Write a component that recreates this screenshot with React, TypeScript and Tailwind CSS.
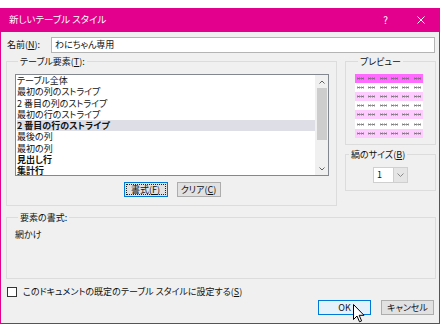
import React from 'react';

const items = [
  { label: 'テーブル全体', bold: false },
  { label: '最初の列のストライプ', bold: false },
  { label: '2 番目の列のストライプ', bold: false },
  { label: '最初の行のストライプ', bold: false },
  { label: '2 番目の行のストライプ', bold: true, selected: true },
  { label: '最後の列', bold: false },
  { label: '最初の列', bold: false },
  { label: '見出し行', bold: true },
  { label: '集計行', bold: true },
];

const previewRows = ['bg-[#ff6bff]', 'bg-white', 'bg-[#ffccff]', 'bg-white', 'bg-[#ffccff]', 'bg-white', 'bg-[#ffccff]'];

function Mark() {
  return (
    <svg width="7" height="3" viewBox="0 0 7 3">
      <path d="M0 0.5L3 2.5M0 2.5L3 0.5M4 0.5L7 2.5M4 2.5L7 0.5M0 1.5H7" stroke="#6b6b6b" strokeWidth="0.6" fill="none" />
    </svg>
  );
}

function Legend({ children }: { children: React.ReactNode }) {
  return <legend className="ml-[3px] px-[2px] leading-[11px]">{children}</legend>;
}

export default function App() {
  return (
    <div className="relative w-[442px] h-[325px] bg-white pt-[8px] font-['Noto_Sans_CJK_JP',sans-serif] [font-feature-settings:'palt'] text-[9px] text-[#111]">
      <div className="w-[440px] h-[316px] bg-[#f0f0f0] border border-t-0 border-[#e3008c] flex flex-col">
        {/* title bar */}
        <div className="h-[24px] shrink-0 bg-[#e3008c] flex items-center pl-[8px] text-white">
          <span className="text-[9.5px] leading-none">新しいテーブル スタイル</span>
          <span className="ml-auto text-[10px] leading-none">?</span>
          <svg className="ml-[29px] mr-[14px]" width="8" height="8" viewBox="0 0 8 8">
            <path d="M0.5 0.5L7.5 7.5M7.5 0.5L0.5 7.5" stroke="#fff" strokeWidth="1" />
          </svg>
        </div>

        <div className="pl-[5px] pr-[3px] flex flex-col">
          {/* name */}
          <div className="mt-[5px] h-[16px] flex items-center">
            <span className="w-[45px] pl-[1px]">名前(<u>N</u>):</span>
            <div className="flex-1 mr-[1px] h-[16px] bg-white border border-[#b4b4b4] flex items-center pl-[3px]">わにちゃん専用</div>
          </div>

          {/* middle */}
          <div className="mt-[3px] flex">
            <fieldset className="w-[331px] h-[150px] border border-[#dcdcdc] pl-[8px] pr-[7px]">
              <Legend>テーブル要素(<u>T</u>):</Legend>
              <div className="mt-[7px] h-[102px] bg-white border border-[#828790] flex overflow-hidden">
                <div className="flex-1 pl-[1px]">
                  {items.map((it) => (
                    <div
                      key={it.label}
                      className={
                        'h-[11.3px] leading-[11.3px] whitespace-nowrap ' +
                        (it.bold ? 'font-bold ' : '') +
                        (it.selected ? 'bg-[#dedee6]' : '')
                      }
                    >
                      {it.label}
                    </div>
                  ))}
                </div>
                <div className="w-[13px] bg-[#f0f0f0] flex flex-col items-center">
                  <svg className="mt-[5px]" width="6" height="4" viewBox="0 0 6 4">
                    <path d="M0.5 3.5L3 1L5.5 3.5" stroke="#606060" strokeWidth="1" fill="none" />
                  </svg>
                  <div className="mt-[4px] w-[10px] h-[52px] bg-[#cdcdcd]" />
                  <svg className="mt-auto mb-[4px]" width="6" height="4" viewBox="0 0 6 4">
                    <path d="M0.5 0.5L3 3L5.5 0.5" stroke="#606060" strokeWidth="1" fill="none" />
                  </svg>
                </div>
              </div>
              <div className="mt-[6px] flex justify-center gap-[9px]">
                <button className="w-[44px] h-[15px] bg-[#e1e1e1] border border-[#0078d7] p-[1px]">
                  <div className="h-full border border-dotted border-[#222] flex items-center justify-center leading-none">
                    書式(<u>F</u>)
                  </div>
                </button>
                <button className="w-[44px] h-[15px] bg-[#e1e1e1] border border-[#adadad] flex items-center justify-center leading-none">
                  クリア(<u>C</u>)
                </button>
              </div>
            </fieldset>

            <div className="ml-[8px] w-[91px] flex flex-col">
              <fieldset className="h-[89px] border border-[#dcdcdc] pl-[9px]">
                <Legend>プレビュー</Legend>
                <div className="mt-[7px] w-[68px]">
                  {previewRows.map((bg, r) => (
                    <div key={r} className={'h-[9.1px] grid grid-cols-6 ' + bg}>
                      {[0, 1, 2, 3, 4, 5].map((c) => (
                        <div key={c} className="flex items-center justify-center">
                          <Mark />
                        </div>
                      ))}
                    </div>
                  ))}
                </div>
              </fieldset>
              <fieldset className="mt-[4px] h-[42px] border border-[#dcdcdc]">
                <Legend>縞のサイズ(<u>B</u>)</Legend>
                <div className="mt-[7px] mx-auto w-[35px] h-[16px] flex border border-[#cfcfcf]">
                  <div className="flex-1 bg-white flex items-center pl-[3px]">1</div>
                  <div className="w-[14px] bg-[#e5e5e5] border-l border-[#cfcfcf] flex items-center justify-center">
                    <svg width="7" height="4" viewBox="0 0 7 4">
                      <path d="M0.5 0.5L3.5 3.5L6.5 0.5" stroke="#8a8a8a" strokeWidth="1" fill="none" />
                    </svg>
                  </div>
                </div>
              </fieldset>
            </div>
          </div>

          {/* element format */}
          <fieldset className="mt-[6px] h-[67px] border border-[#dcdcdc] pl-[8px]">
            <Legend>要素の書式:</Legend>
            <div className="mt-[6px] leading-[11px]">網かけ</div>
          </fieldset>

          {/* checkbox */}
          <div className="mt-[7px] h-[12px] flex items-center">
            <div className="ml-[1px] w-[10px] h-[10px] bg-white border border-[#333]" />
            <span className="ml-[6px] leading-[12px]">このドキュメントの既定のテーブル スタイルに設定する(<u>S</u>)</span>
          </div>

          {/* buttons */}
          <div className="mt-[2px] flex justify-end gap-[10px] pr-[2px]">
            <button className="w-[53px] h-[15px] bg-[#e5f1fb] border border-[#0078d7] flex items-center justify-center leading-none">
              OK
            </button>
            <button className="w-[53px] h-[15px] bg-[#e1e1e1] border border-[#adadad] flex items-center justify-center leading-none">
              キャンセル
            </button>
          </div>
        </div>
      </div>

      {/* mouse pointer */}
      <svg className="absolute left-[353px] top-[304px]" width="12" height="19" viewBox="0 0 12 19">
        <path d="M0.5 0.5V15.5L4 12L6.5 17.8L8.6 16.9L6.2 11.3H11Z" fill="#fff" stroke="#000" strokeWidth="1" strokeLinejoin="round" />
      </svg>
    </div>
  );
}
